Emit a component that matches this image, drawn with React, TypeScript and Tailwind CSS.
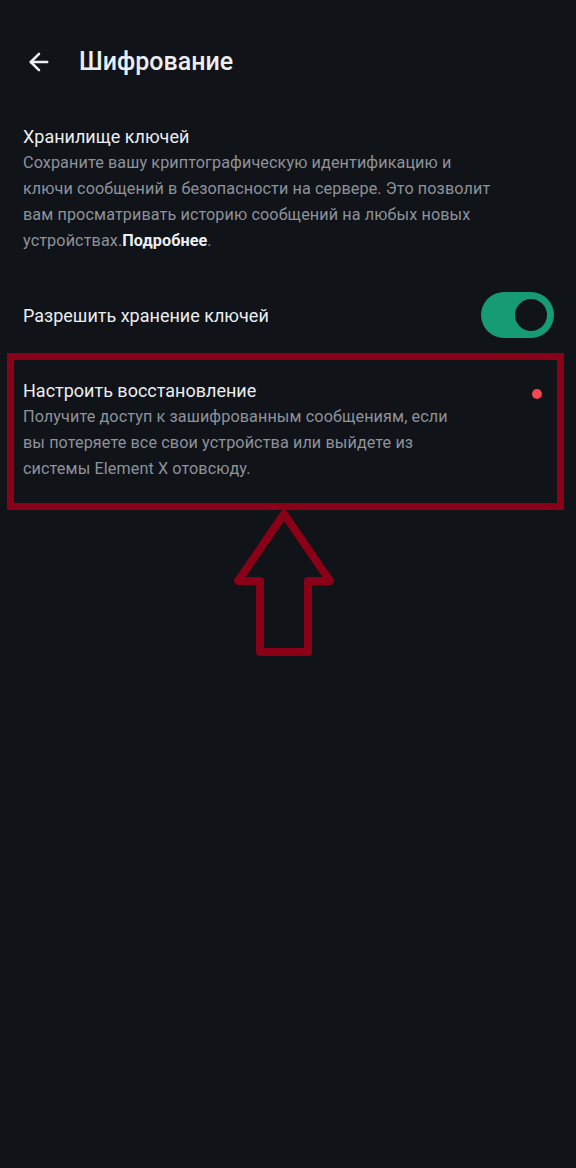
import { ArrowLeft } from 'lucide-react';

const font = { fontFamily: 'Roboto, "Noto Sans", sans-serif' };

export default function App() {
  return (
    <div className="relative w-[576px] h-[1168px] bg-[#101318] overflow-hidden" style={font}>
      {/* Header */}
      <div className="flex items-center h-[124px] pl-[25px]">
        <ArrowLeft className="w-[28px] h-[28px] text-[#ebeef2]" strokeWidth={2.2} />
        <h1 className="ml-[26px] text-[25px] font-medium text-[#ebeef2]">Шифрование</h1>
      </div>

      {/* Key storage */}
      <div className="px-[23px]">
        <div className="text-[18px] leading-[26px] text-[#ebeef2]">Хранилище ключей</div>
        <p className="text-[16.2px] leading-[26px] text-[#8d929b] whitespace-nowrap tracking-[0.1px]">
          Сохраните вашу криптографическую идентификацию и
          <br />
          ключи сообщений в безопасности на сервере. Это позволит
          <br />
          вам просматривать историю сообщений на любых новых
          <br />
          устройствах.<span className="font-bold text-[#ebeef2]">Подробнее</span>.
        </p>
      </div>

      {/* Toggle row */}
      <div className="flex items-center justify-between mt-[38px] pl-[23px] pr-[22px]">
        <span className="text-[18px] text-[#ebeef2]">Разрешить хранение ключей</span>
        <div className="flex items-center justify-end w-[73px] h-[46px] rounded-full bg-[#169b75] pr-[7px]">
          <div className="w-[32px] h-[32px] rounded-full bg-[#101318]" />
        </div>
      </div>

      {/* Recovery */}
      <div className="flex mt-[40px] pl-[23px] pr-[34px]">
        <div className="flex-1">
          <div className="text-[18px] leading-[26px] text-[#ebeef2]">Настроить восстановление</div>
          <p className="text-[16.2px] leading-[26px] text-[#8d929b] whitespace-nowrap tracking-[0.1px]">
            Получите доступ к зашифрованным сообщениям, если
            <br />
            вы потеряете все свои устройства или выйдете из
            <br />
            системы Element X отовсюду.
          </p>
        </div>
        <div className="w-[10px] h-[10px] mt-[11px] rounded-full bg-[#f4474e]" />
      </div>

      {/* Annotation: highlight box */}
      <div className="absolute left-[7px] top-[353px] w-[557px] h-[157px] border-[7px] border-[#8a0016]" />

      {/* Annotation: arrow */}
      <svg className="absolute left-0 top-0" width="576" height="700" viewBox="0 0 576 700" fill="none">
        <path
          d="M284 514 L238 581 L260 581 L260 652 L308 652 L308 581 L330 581 Z"
          stroke="#8a0016"
          strokeWidth="8"
          strokeLinejoin="round"
        />
      </svg>
    </div>
  );
}
